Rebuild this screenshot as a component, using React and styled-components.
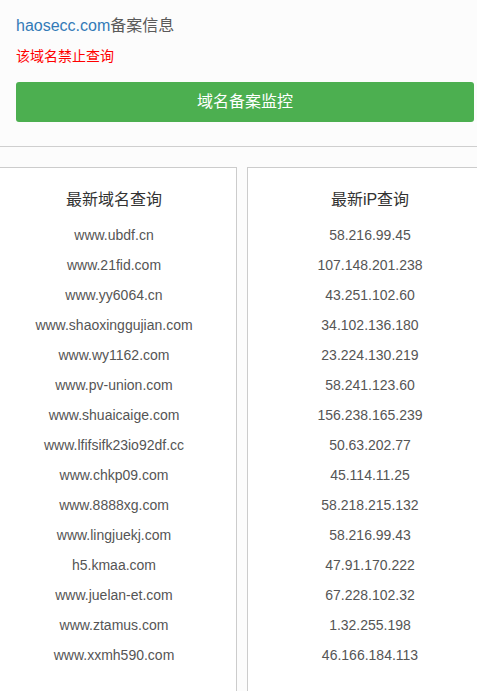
import React from "react";
import styled, { createGlobalStyle } from "styled-components";

const Global = createGlobalStyle`
  html, body { margin: 0; padding: 0; background: #fcfcfc; overflow: hidden; }
  body { font-family: "Liberation Sans", Arial, "Noto Sans CJK SC", sans-serif; }
  * { box-sizing: border-box; }
`;

const Page = styled.div`
  width: 477px;
  overflow: hidden;
`;

const Top = styled.section`
  padding: 14px 3px 24px 16px;
  border-bottom: 1px solid #cfcfcf;
`;

const Title = styled.h1`
  margin: 0;
  height: 24px;
  font-size: 16px;
  line-height: 24px;
  font-weight: normal;
  color: #5a5a5a;
`;

const Domain = styled.span`
  color: #337ab7;
`;

const Notice = styled.p`
  margin: 8px 0 16px;
  height: 20px;
  font-size: 14px;
  line-height: 20px;
  color: #ff0000;
`;

const MonitorButton = styled.button`
  display: block;
  width: 458px;
  height: 40px;
  border: none;
  border-radius: 3px;
  background: #4caf50;
  color: #fff;
  font-family: inherit;
  font-size: 16px;
  line-height: 40px;
  padding: 0;
  text-align: center;
  cursor: pointer;
`;

const Columns = styled.div`
  display: flex;
  gap: 10px;
  margin: 20px 0 0 -9px;
`;

const Panel = styled.div`
  flex: 0 0 246px;
  background: #fff;
  border: 1px solid #cccccc;
  border-bottom: none;
  padding: 20px 0 40px;
  text-align: center;
`;

const PanelTitle = styled.h2`
  margin: 0 0 8px;
  font-size: 16px;
  line-height: 24px;
  height: 24px;
  font-weight: normal;
  color: #333;
`;

const List = styled.ul`
  list-style: none;
  margin: 0;
  padding: 0;
`;

const Item = styled.li`
  height: 30px;
  font-size: 14px;
  line-height: 30px;
  color: #555;
`;

const domains = [
  "www.ubdf.cn",
  "www.21fid.com",
  "www.yy6064.cn",
  "www.shaoxinggujian.com",
  "www.wy1162.com",
  "www.pv-union.com",
  "www.shuaicaige.com",
  "www.lfifsifk23io92df.cc",
  "www.chkp09.com",
  "www.8888xg.com",
  "www.lingjuekj.com",
  "h5.kmaa.com",
  "www.juelan-et.com",
  "www.ztamus.com",
  "www.xxmh590.com",
];

const ips = [
  "58.216.99.45",
  "107.148.201.238",
  "43.251.102.60",
  "34.102.136.180",
  "23.224.130.219",
  "58.241.123.60",
  "156.238.165.239",
  "50.63.202.77",
  "45.114.11.25",
  "58.218.215.132",
  "58.216.99.43",
  "47.91.170.222",
  "67.228.102.32",
  "1.32.255.198",
  "46.166.184.113",
];

export default function App() {
  return (
    <Page>
      <Global />
      <Top>
        <Title>
          <Domain>haosecc.com</Domain>备案信息
        </Title>
        <Notice>该域名禁止查询</Notice>
        <MonitorButton>域名备案监控</MonitorButton>
      </Top>
      <Columns>
        <Panel>
          <PanelTitle>最新域名查询</PanelTitle>
          <List>
            {domains.map((d) => (
              <Item key={d}>{d}</Item>
            ))}
          </List>
        </Panel>
        <Panel>
          <PanelTitle>最新iP查询</PanelTitle>
          <List>
            {ips.map((d) => (
              <Item key={d}>{d}</Item>
            ))}
          </List>
        </Panel>
      </Columns>
    </Page>
  );
}
